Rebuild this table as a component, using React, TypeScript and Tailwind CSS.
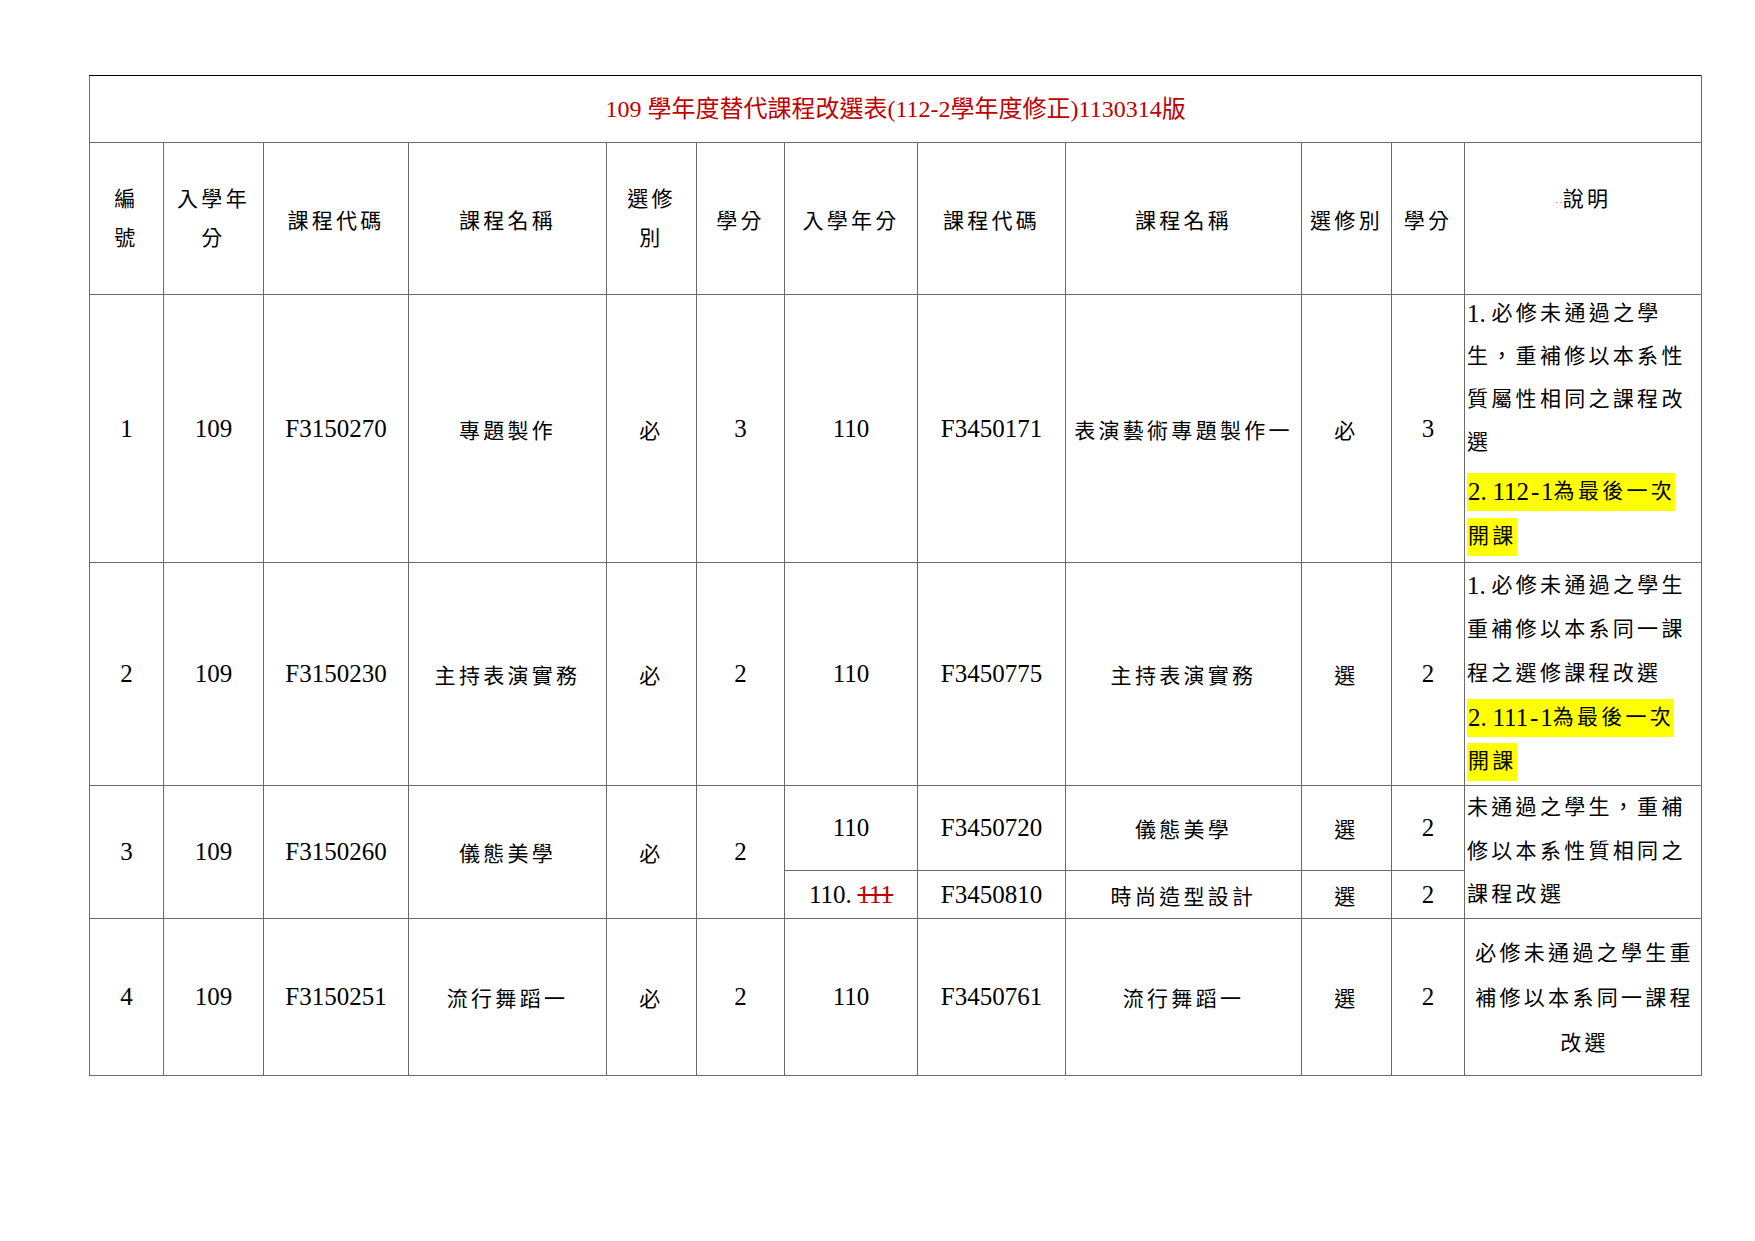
import React from 'react';

const line = 'border border-[#6b6b6b] p-0 text-center align-middle';
const zh = 'text-[21px] tracking-[3.3px]';

const Num: React.FC<{ children: React.ReactNode }> = ({ children }) => (
  <span className="text-[25px] tracking-normal">{children}</span>
);

// half-width punctuation as in the original document (same width as a digit)
const Dot = () => <span className="inline-block w-[12px] text-left">.</span>;
const Dash = () => <span className="inline-block w-[12px] text-center">-</span>;

const Zh: React.FC<{ children: React.ReactNode }> = ({ children }) => <span className={zh}>{children}</span>;

// single line cjk text in a cell, sits a little low like the original font
const Cell: React.FC<{ children: React.ReactNode }> = ({ children }) => (
  <span className={`${zh} relative top-[3px]`}>{children}</span>
);

// one line of the 說明 column
const NoteLine: React.FC<{ children: React.ReactNode; h?: string }> = ({ children, h = 'h-[44px]' }) => (
  <div className={`${h} flex items-center whitespace-nowrap`}>{children}</div>
);

const Mark: React.FC<{ children: React.ReactNode }> = ({ children }) => (
  <span className="inline-flex items-center h-[38px] bg-[#ffff00] pl-[1px]">{children}</span>
);

const App: React.FC = () => {
  return (
    <div className="min-h-[1241px] w-[1755px] bg-white pt-[75px] pl-[89px] text-black font-['Liberation_Serif','Noto_Sans_CJK_TC',serif]">
      <table className="table-fixed border-collapse w-[1612px]">
        <colgroup>
          <col className="w-[74px]" />
          <col className="w-[100px]" />
          <col className="w-[145px]" />
          <col className="w-[198px]" />
          <col className="w-[90px]" />
          <col className="w-[88px]" />
          <col className="w-[133px]" />
          <col className="w-[148px]" />
          <col className="w-[236px]" />
          <col className="w-[90px]" />
          <col className="w-[73px]" />
          <col className="w-[237px]" />
        </colgroup>
        <tbody>
          <tr className="h-[67px]">
            <td colSpan={12} className={`${line} border-t-black text-[24px] text-[#c00000]`}>
              109 學年度替代課程改選表(112-2學年度修正)1130314版
            </td>
          </tr>

          {/* header */}
          <tr className="h-[152px]">
            <td className={`${line} leading-[39px]`}>
              <div className={zh}>編</div>
              <div className={zh}>號</div>
            </td>
            <td className={`${line} leading-[39px]`}>
              <div className={zh}>入學年</div>
              <div className={zh}>分</div>
            </td>
            <td className={line}><Cell>課程代碼</Cell></td>
            <td className={line}><Cell>課程名稱</Cell></td>
            <td className={`${line} leading-[39px]`}>
              <div className={zh}>選修</div>
              <div className={zh}>別</div>
            </td>
            <td className={line}><Cell>學分</Cell></td>
            <td className={line}><Cell>入學年分</Cell></td>
            <td className={line}><Cell>課程代碼</Cell></td>
            <td className={line}><Cell>課程名稱</Cell></td>
            <td className={line}><Cell>選修別</Cell></td>
            <td className={line}><Cell>學分</Cell></td>
            <td className={`${line} leading-[39px]`}>
              <div className="relative top-[2px]">
                <span className="text-[8px] text-gray-500">‥</span>
                <span className={zh}>說明</span>
              </div>
              <div>&nbsp;</div>
            </td>
          </tr>

          {/* 1 */}
          <tr className="h-[268px]">
            <td className={line}><Num>1</Num></td>
            <td className={line}><Num>109</Num></td>
            <td className={line}><Num>F3150270</Num></td>
            <td className={line}><Cell>專題製作</Cell></td>
            <td className={line}><Cell>必</Cell></td>
            <td className={line}><Num>3</Num></td>
            <td className={line}><Num>110</Num></td>
            <td className={line}><Num>F3450171</Num></td>
            <td className={line}><Cell>表演藝術專題製作一</Cell></td>
            <td className={line}><Cell>必</Cell></td>
            <td className={line}><Num>3</Num></td>
            <td className={`${line} align-top text-left`}>
              <div className="pl-[2px] -mt-[3px]">
                <NoteLine h="h-[43px]"><Num>1<Dot /></Num><Zh>必修未通過之學</Zh></NoteLine>
                <NoteLine h="h-[43px]"><Zh>生，重補修以本系性</Zh></NoteLine>
                <NoteLine h="h-[43px]"><Zh>質屬性相同之課程改</Zh></NoteLine>
                <NoteLine h="h-[43px]"><Zh>選</Zh></NoteLine>
                <div className="mt-[5px]">
                  <NoteLine h="h-[45px]"><Mark><Num>2<Dot />112<Dash />1</Num><Zh>為最後一次</Zh></Mark></NoteLine>
                  <NoteLine h="h-[45px]"><Mark><Zh>開課</Zh></Mark></NoteLine>
                </div>
              </div>
            </td>
          </tr>

          {/* 2 */}
          <tr className="h-[223px]">
            <td className={line}><Num>2</Num></td>
            <td className={line}><Num>109</Num></td>
            <td className={line}><Num>F3150230</Num></td>
            <td className={line}><Cell>主持表演實務</Cell></td>
            <td className={line}><Cell>必</Cell></td>
            <td className={line}><Num>2</Num></td>
            <td className={line}><Num>110</Num></td>
            <td className={line}><Num>F3450775</Num></td>
            <td className={line}><Cell>主持表演實務</Cell></td>
            <td className={line}><Cell>選</Cell></td>
            <td className={line}><Num>2</Num></td>
            <td className={`${line} align-top text-left`}>
              <div className="pl-[2px] pt-[1px]">
                <NoteLine><Num>1<Dot /></Num><Zh>必修未通過之學生</Zh></NoteLine>
                <NoteLine><Zh>重補修以本系同一課</Zh></NoteLine>
                <NoteLine><Zh>程之選修課程改選</Zh></NoteLine>
                <NoteLine><Mark><Num>2<Dot />111<Dash />1</Num><Zh>為最後一次</Zh></Mark></NoteLine>
                <NoteLine><Mark><Zh>開課</Zh></Mark></NoteLine>
              </div>
            </td>
          </tr>

          {/* 3 */}
          <tr className="h-[85px]">
            <td rowSpan={2} className={line}><Num>3</Num></td>
            <td rowSpan={2} className={line}><Num>109</Num></td>
            <td rowSpan={2} className={line}><Num>F3150260</Num></td>
            <td rowSpan={2} className={line}><Cell>儀態美學</Cell></td>
            <td rowSpan={2} className={line}><Cell>必</Cell></td>
            <td rowSpan={2} className={line}><Num>2</Num></td>
            <td className={line}><Num>110</Num></td>
            <td className={line}><Num>F3450720</Num></td>
            <td className={line}><Cell>儀態美學</Cell></td>
            <td className={line}><Cell>選</Cell></td>
            <td className={line}><Num>2</Num></td>
            <td rowSpan={2} className={`${line} align-top text-left`}>
              <div className="pl-[2px]">
                <NoteLine h="h-[44px]"><Zh>未通過之學生，重補</Zh></NoteLine>
                <NoteLine h="h-[44px]"><Zh>修以本系性質相同之</Zh></NoteLine>
                <NoteLine h="h-[42px]"><Zh>課程改選</Zh></NoteLine>
              </div>
            </td>
          </tr>
          <tr className="h-[48px]">
            <td className={line}>
              <span className="text-[25px]">110<Dot /></span>
              <span className="text-[25px] text-[#c00000] line-through decoration-[#c00000]">111</span>
            </td>
            <td className={line}><Num>F3450810</Num></td>
            <td className={line}><Cell>時尚造型設計</Cell></td>
            <td className={line}><Cell>選</Cell></td>
            <td className={line}><Num>2</Num></td>
          </tr>

          {/* 4 */}
          <tr className="h-[157px]">
            <td className={line}><Num>4</Num></td>
            <td className={line}><Num>109</Num></td>
            <td className={line}><Num>F3150251</Num></td>
            <td className={line}><Cell>流行舞蹈一</Cell></td>
            <td className={line}><Cell>必</Cell></td>
            <td className={line}><Num>2</Num></td>
            <td className={line}><Num>110</Num></td>
            <td className={line}><Num>F3450761</Num></td>
            <td className={line}><Cell>流行舞蹈一</Cell></td>
            <td className={line}><Cell>選</Cell></td>
            <td className={line}><Num>2</Num></td>
            <td className={line}>
              <div className="flex flex-col items-center pl-[3px] relative top-[2px]">
                <NoteLine h="h-[45px]"><Zh>必修未通過之學生重</Zh></NoteLine>
                <NoteLine h="h-[45px]"><Zh>補修以本系同一課程</Zh></NoteLine>
                <NoteLine h="h-[45px]"><Zh>改選</Zh></NoteLine>
              </div>
            </td>
          </tr>
        </tbody>
      </table>
    </div>
  );
};

export default App;
